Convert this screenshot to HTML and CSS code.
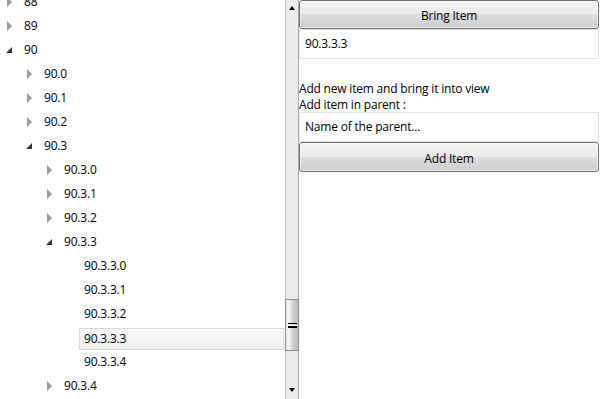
FILE: index.html
```html
<!DOCTYPE html>
<html>
<head>
<meta charset="utf-8">
<link rel="stylesheet" href="styles.css">
</head>
<body>
<div class="app">
  <div class="tree-pane">
    <div class="tree">
      <div class="row l0"><span class="tog closed"></span><span class="lbl">88</span></div>
      <div class="row l0"><span class="tog closed"></span><span class="lbl">89</span></div>
      <div class="row l0"><span class="tog open"></span><span class="lbl">90</span></div>
      <div class="row l1"><span class="tog closed"></span><span class="lbl">90.0</span></div>
      <div class="row l1"><span class="tog closed"></span><span class="lbl">90.1</span></div>
      <div class="row l1"><span class="tog closed"></span><span class="lbl">90.2</span></div>
      <div class="row l1"><span class="tog open"></span><span class="lbl">90.3</span></div>
      <div class="row l2"><span class="tog closed"></span><span class="lbl">90.3.0</span></div>
      <div class="row l2"><span class="tog closed"></span><span class="lbl">90.3.1</span></div>
      <div class="row l2"><span class="tog closed"></span><span class="lbl">90.3.2</span></div>
      <div class="row l2"><span class="tog open"></span><span class="lbl">90.3.3</span></div>
      <div class="row l3"><span class="tog none"></span><span class="lbl">90.3.3.0</span></div>
      <div class="row l3"><span class="tog none"></span><span class="lbl">90.3.3.1</span></div>
      <div class="row l3"><span class="tog none"></span><span class="lbl">90.3.3.2</span></div>
      <div class="row l3 selected"><span class="tog none"></span><span class="lbl">90.3.3.3</span></div>
      <div class="row l3"><span class="tog none"></span><span class="lbl">90.3.3.4</span></div>
      <div class="row l2"><span class="tog closed"></span><span class="lbl">90.3.4</span></div>
    </div>
    <div class="scrollbar">
      <div class="arrow up"></div>
      <div class="track">
        <div class="track-top"></div>
        <div class="thumb"><span class="grip"></span></div>
        <div class="track-bottom"></div>
      </div>
      <div class="arrow down"></div>
    </div>
  </div>
  <div class="side">
    <button class="btn btn-bring">Bring Item</button>
    <div class="textbox">90.3.3.3</div>
    <div class="label first">Add new item and bring it into view</div>
    <div class="label second">Add item in parent :</div>
    <div class="textbox">Name of the parent...</div>
    <button class="btn btn-add">Add Item</button>
  </div>
</div>
</body>
</html>
```
FILE: styles.css
```css
html, body {
  margin: 0;
  padding: 0;
  background: #fff;
}
body {
  font-family: "Segoe UI", "Open Sans", "Noto Sans", sans-serif;
  font-size: 12px;
  letter-spacing: -0.2px;
  color: #000;
}
.app {
  display: flex;
  width: 605px;
  height: 399px;
  overflow: hidden;
}
.tree-pane {
  display: flex;
  width: 299px;
  height: 399px;
}
.tree {
  flex: 1;
  overflow: hidden;
  display: flex;
  flex-direction: column;
  margin-top: -10px;
  padding-right: 1px;
}
.row {
  height: 24px;
  flex: none;
  display: flex;
  align-items: center;
  position: relative;
}
.row.l0 { padding-left: 4px; }
.row.l1 { padding-left: 24px; }
.row.l2 { padding-left: 44px; }
.row.l3 { padding-left: 64px; }
.tog {
  width: 10px;
  height: 10px;
  margin-right: 10px;
  flex: none;
  position: relative;
}
.tog.closed::before {
  content: "";
  position: absolute;
  left: 3px;
  top: 0;
  border-left: 5px solid #989898;
  border-top: 5px solid transparent;
  border-bottom: 5px solid transparent;
}
.tog.open::before {
  content: "";
  position: absolute;
  left: 2px;
  top: 2px;
  border-right: 6px solid #333;
  border-top: 6px solid transparent;
}
.lbl {
  line-height: 22px;
  padding: 0 5px 0 0;
}
.row.selected .lbl {
  flex: 1;
  margin-left: -5px;
  padding-left: 4px;
  height: 20px;
  line-height: 20px;
  border: 1px solid #dadada;
  background: linear-gradient(#fafafa, #efefef);
  margin-top: 1px;
}
.scrollbar {
  width: 14px;
  flex: none;
  display: flex;
  flex-direction: column;
  background: #ececec;
  border-left: 1px solid #b9b9b9;
  border-right: 1px solid #a8a8a8;
  box-sizing: border-box;
}
.arrow {
  height: 17px;
  flex: none;
  position: relative;
}
.arrow.up::before {
  content: "";
  position: absolute;
  left: 3px;
  top: 6px;
  border-bottom: 4px solid #000;
  border-left: 3.5px solid transparent;
  border-right: 3.5px solid transparent;
}
.arrow.down::before {
  content: "";
  position: absolute;
  left: 3px;
  top: 6px;
  border-top: 4px solid #000;
  border-left: 3.5px solid transparent;
  border-right: 3.5px solid transparent;
}
.track {
  flex: 1;
  display: flex;
  flex-direction: column;
}
.track-top {
  height: 282px;
  flex: none;
}
.thumb {
  height: 52px;
  flex: none;
  box-sizing: border-box;
  border: 1px solid #8c8c8c;
  margin: 0 -1px;
  background: linear-gradient(90deg, #e8e8e8 0%, #f4f4f4 25%, #cfcfcf 60%, #bcbcbc 100%);
  display: flex;
  align-items: center;
  justify-content: center;
}
.grip {
  width: 9px;
  border-top: 1px solid #000;
  border-bottom: 1px solid #000;
  background: linear-gradient(#fff 0 1px, #000 1px 2px, transparent 2px);
  background-size: 100% 5px;
  background-position: 0 1px;
  background-repeat: no-repeat;
  box-sizing: content-box;
  height: 3px;
}
.track-bottom {
  flex: 1;
}
.side {
  width: 300px;
  flex: none;
  display: flex;
  flex-direction: column;
}
.btn {
  font: inherit;
  letter-spacing: inherit;
  color: #000;
  height: 29px;
  box-sizing: border-box;
  border: 1px solid #707070;
  border-radius: 3px;
  background: linear-gradient(#f3f3f3 0%, #ebebeb 50%, #dddddd 50%, #cfcfcf 100%);
  padding: 0;
  margin: 0;
  box-shadow: inset 0 0 0 1px rgba(255,255,255,0.6);
}
.btn-bring {
  padding-top: 2px;
}
.btn-add {
  height: 30px;
  padding-top: 2px;
}
.textbox {
  height: 30px;
  box-sizing: border-box;
  border: 1px solid #e3e3e3;
  padding: 0 5px;
  line-height: 27px;
}
.label {
  line-height: 16px;
}
.label.first {
  margin-top: 21px;
  padding-top: 1px;
}
.label.second {
  line-height: 15px;
}
```
